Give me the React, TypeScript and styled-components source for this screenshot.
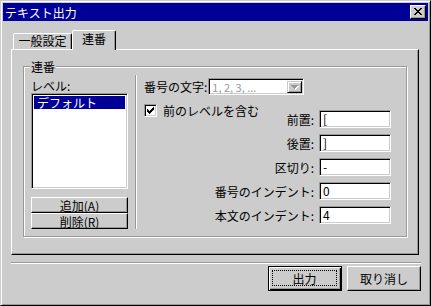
import React from 'react'
import styled, { createGlobalStyle } from 'styled-components'

const FACE = '#cccccc'
const SHADOW = '#999999'
const NAVY = '#000099'

const GlobalStyle = createGlobalStyle`
  html, body { margin: 0; padding: 0; background: ${FACE}; }
  body {
    font-family: "Noto Sans CJK JP", "DejaVu Sans", sans-serif;
    font-size: 12px;
    color: #000;
  }
`

const Dialog = styled.div`
  width: 431px;
  height: 306px;
  box-sizing: border-box;
  background: ${FACE};
  border: 1px solid;
  border-color: ${FACE} #000 #000 ${FACE};
  box-shadow: inset 1px 1px #fff, inset -1px -1px ${SHADOW};
  padding: 2px;
  display: flex;
  flex-direction: column;
`

const TitleBar = styled.div`
  height: 18px;
  flex-shrink: 0;
  background: ${NAVY};
  color: #fff;
  display: flex;
  align-items: center;
  justify-content: space-between;
  padding: 0 2px 0 2px;
`

const Title = styled.span`
  font-size: 12px;
  line-height: 13px;
`

const CloseButton = styled.div`
  width: 16px;
  height: 14px;
  box-sizing: border-box;
  background: ${FACE};
  border: 1px solid;
  border-color: #fff #000 #000 #fff;
  box-shadow: inset -1px -1px ${SHADOW};
  display: flex;
  align-items: center;
  justify-content: center;
  padding: 0 1px 1px 0;
`

const Body = styled.div`
  flex: 1;
  display: flex;
  flex-direction: column;
  padding: 9px 7px 0 8px;
`

const TabRow = styled.div`
  height: 19px;
  display: flex;
  align-items: flex-end;
  padding-left: 2px;
`

const Tab = styled.div<{ $active?: boolean; $width: number }>`
  position: relative;
  z-index: ${p => (p.$active ? 1 : 0)};
  box-sizing: border-box;
  width: ${p => p.$width}px;
  height: ${p => (p.$active ? 20 : 16)}px;
  margin-bottom: ${p => (p.$active ? -1 : 0)}px;
  background: ${FACE};
  border: 1px solid;
  border-bottom: none;
  border-color: #fff #000 transparent #fff;
  border-radius: 2px 2px 0 0;
  box-shadow: inset -1px 0 ${SHADOW};
  display: flex;
  justify-content: center;
  padding-top: ${p => (p.$active ? 2 : 1)}px;
  line-height: 12px;
`

const Panel = styled.div`
  box-sizing: border-box;
  height: 206px;
  margin-right: 2px;
  border: 1px solid;
  border-color: #fff #000 #000 #fff;
  box-shadow: inset -1px -1px ${SHADOW};
  padding: 16px 0 0 11px;
`

const Group = styled.div`
  position: relative;
  box-sizing: border-box;
  width: 384px;
  height: 171px;
  border: 1px solid ${SHADOW};
  box-shadow: inset 1px 1px #fff, 1px 1px #fff;
  display: flex;
  align-items: flex-start;
  padding: 8px 0 0 7px;
`

const Caption = styled.span`
  position: absolute;
  top: -7px;
  left: 6px;
  padding: 0 1px;
  background: ${FACE};
  line-height: 13px;
`

const LeftColumn = styled.div`
  width: 97px;
  display: flex;
  flex-direction: column;
  padding-top: 4px;
`

const Label = styled.span`
  line-height: 13px;
  white-space: nowrap;
`

const ListBox = styled.div`
  box-sizing: border-box;
  height: 96px;
  margin-top: 1px;
  background: #fff;
  border: 1px solid;
  border-color: ${SHADOW} #fff #fff ${SHADOW};
  box-shadow: inset 1px 1px #000, inset -1px -1px ${FACE};
  padding: 2px;
`

const ListItem = styled.div<{ $selected?: boolean }>`
  height: 13px;
  line-height: 13px;
  padding-left: 3px;
  background: ${p => (p.$selected ? NAVY : 'transparent')};
  color: ${p => (p.$selected ? '#fff' : '#000')};
`

const ButtonStack = styled.div`
  display: flex;
  flex-direction: column;
  margin-top: 8px;
`

const SmallButton = styled.div`
  box-sizing: border-box;
  height: 16px;
  background: ${FACE};
  border: 1px solid;
  border-color: #fff #000 #000 #fff;
  box-shadow: inset -1px -1px ${SHADOW};
  display: flex;
  align-items: center;
  justify-content: center;
  line-height: 13px;
  u { text-underline-offset: 1px; }
`

const VSeparator = styled.div`
  width: 0;
  height: 154px;
  margin: 0 7px;
  border-left: 1px solid ${SHADOW};
  border-right: 1px solid #fff;
`

const RightColumn = styled.div`
  width: 247px;
  display: flex;
  flex-direction: column;
  padding-top: 3px;
`

const TopRow = styled.div`
  display: flex;
  align-items: center;
  gap: 1px;
`

const Combo = styled.div`
  box-sizing: border-box;
  width: 96px;
  height: 17px;
  background: #fff;
  border: 1px solid;
  border-color: ${SHADOW} #fff #fff ${SHADOW};
  box-shadow: inset 1px 1px #000, inset -1px -1px ${FACE};
  display: flex;
  align-items: stretch;
  padding: 2px 1px 1px 2px;
`

const ComboText = styled.span`
  flex: 1;
  color: ${SHADOW};
  line-height: 13px;
  padding-left: 1px;
  font-size: 11px;
`

const ArrowButton = styled.div`
  box-sizing: border-box;
  width: 15px;
  background: ${FACE};
  border: 1px solid;
  border-color: ${FACE} #000 #000 ${FACE};
  box-shadow: inset 1px 1px #fff, inset -1px -1px ${SHADOW};
  display: flex;
  align-items: center;
  justify-content: center;
`

const CheckRow = styled.div`
  display: flex;
  align-items: center;
  gap: 6px;
  height: 13px;
  margin-top: 9px;
`

const CheckBox = styled.div`
  box-sizing: border-box;
  width: 13px;
  height: 13px;
  background: #fff;
  border: 1px solid;
  border-color: ${SHADOW} #fff #fff ${SHADOW};
  box-shadow: inset 1px 1px #000, inset -1px -1px ${FACE};
  display: flex;
  align-items: center;
  justify-content: center;
`

const Fields = styled.div`
  display: flex;
  flex-direction: column;
  align-items: flex-end;
  gap: 6px;
  margin-top: -7px;
`

const FieldRow = styled.div`
  display: flex;
  align-items: center;
  gap: 5px;
`

const TextField = styled.div`
  box-sizing: border-box;
  width: 72px;
  height: 18px;
  background: #fff;
  border: 1px solid;
  border-color: ${SHADOW} #fff #fff ${SHADOW};
  box-shadow: inset 1px 1px #000, inset -1px -1px ${FACE};
  padding: 0 3px;
  line-height: 16px;
  white-space: pre;
`

const HSeparator = styled.div`
  height: 0;
  margin-top: 7px;
  border-top: 1px solid ${SHADOW};
  border-bottom: 1px solid #fff;
`

const ButtonRow = styled.div`
  display: flex;
  justify-content: flex-end;
  gap: 5px;
  margin-top: 2px;
`

const PushButton = styled.div<{ $default?: boolean }>`
  box-sizing: border-box;
  width: 74px;
  height: 25px;
  background: ${FACE};
  border: 1px solid;
  border-color: ${p => (p.$default ? '#000' : '#fff #000 #000 #fff')};
  box-shadow: ${p =>
    p.$default
      ? `inset 1px 1px #fff, inset -1px -1px #000, inset -2px -2px ${SHADOW}`
      : `inset -1px -1px ${SHADOW}`};
  display: flex;
  align-items: stretch;
  padding: ${p => (p.$default ? '3px 4px 4px 3px' : '3px')};
`

const FocusRing = styled.span<{ $show?: boolean }>`
  flex: 1;
  display: flex;
  align-items: center;
  justify-content: center;
  border: 1px ${p => (p.$show ? 'dotted #000' : 'solid transparent')};
  line-height: 13px;
`

const CloseIcon = () => (
  <svg width="8" height="7" viewBox="0 0 8 7" shapeRendering="crispEdges">
    <path
      fill="#000"
      d="M0 0h2v1H0zM6 0h2v1H6zM1 1h2v1H1zM5 1h2v1H5zM2 2h4v1H2zM3 3h2v1H3zM2 4h4v1H2zM1 5h2v1H1zM5 5h2v1H5zM0 6h2v1H0zM6 6h2v1H6z"
    />
  </svg>
)

const CheckMark = () => (
  <svg width="7" height="7" viewBox="0 0 7 7" shapeRendering="crispEdges">
    <path
      fill="#000"
      d="M6 0h1v1H6zM5 1h2v1H5zM0 2h1v1H0zM4 2h3v1H4zM0 3h2v1H0zM3 3h3v1H3zM0 4h5v1H0zM1 5h3v1H1zM2 6h1v1H2z"
    />
  </svg>
)

const ArrowIcon = () => (
  <svg width="8" height="5" viewBox="0 0 8 5" shapeRendering="crispEdges">
    <path fill="#fff" d="M1 1h7v1H1zM2 2h5v1H2zM3 3h3v1H3zM4 4h1v1H4z" />
    <path fill={SHADOW} d="M0 0h7v1H0zM1 1h5v1H1zM2 2h3v1H2zM3 3h1v1H3z" />
  </svg>
)

const fields = [
  { label: '前置:', value: '[' },
  { label: '後置:', value: ']' },
  { label: '区切り:', value: '-' },
  { label: '番号のインデント:', value: '0' },
  { label: '本文のインデント:', value: '4' },
]

export default function App() {
  return (
    <>
      <GlobalStyle />
      <Dialog>
        <TitleBar>
          <Title>テキスト出力</Title>
          <CloseButton>
            <CloseIcon />
          </CloseButton>
        </TitleBar>
        <Body>
          <TabRow>
            <Tab $width={59}>一般設定</Tab>
            <Tab $width={44} $active>連番</Tab>
          </TabRow>
          <Panel>
            <Group>
              <Caption>連番</Caption>
              <LeftColumn>
                <Label>レベル:</Label>
                <ListBox>
                  <ListItem $selected>デフォルト</ListItem>
                </ListBox>
                <ButtonStack>
                  <SmallButton>
                    <span>追加(<u>A</u>)</span>
                  </SmallButton>
                  <SmallButton>
                    <span>削除(<u>R</u>)</span>
                  </SmallButton>
                </ButtonStack>
              </LeftColumn>
              <VSeparator />
              <RightColumn>
                <TopRow>
                  <Label>番号の文字:</Label>
                  <Combo>
                    <ComboText>1, 2, 3, ...</ComboText>
                    <ArrowButton>
                      <ArrowIcon />
                    </ArrowButton>
                  </Combo>
                </TopRow>
                <CheckRow>
                  <CheckBox>
                    <CheckMark />
                  </CheckBox>
                  <Label>前のレベルを含む</Label>
                </CheckRow>
                <Fields>
                  {fields.map(f => (
                    <FieldRow key={f.label}>
                      <Label>{f.label}</Label>
                      <TextField>{f.value}</TextField>
                    </FieldRow>
                  ))}
                </Fields>
              </RightColumn>
            </Group>
          </Panel>
          <HSeparator />
          <ButtonRow>
            <PushButton $default>
              <FocusRing $show>出力</FocusRing>
            </PushButton>
            <PushButton>
              <FocusRing>取り消し</FocusRing>
            </PushButton>
          </ButtonRow>
        </Body>
      </Dialog>
    </>
  )
}
